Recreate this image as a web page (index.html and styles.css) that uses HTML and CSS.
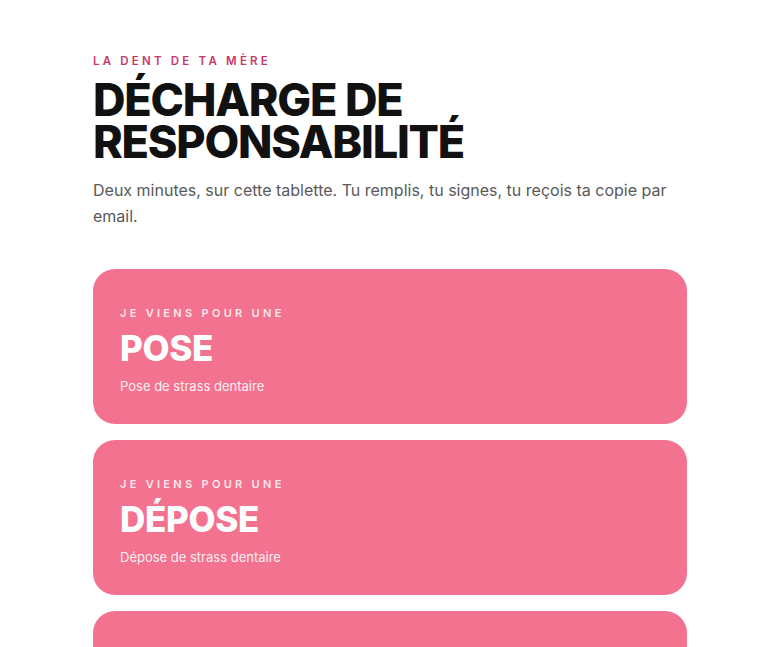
FILE: index.html
```
<!DOCTYPE html>
<html lang="fr">
<head>
<meta charset="utf-8">
<link rel="stylesheet" href="styles.css">
</head>
<body>
<main class="page">
  <header class="intro">
    <p class="brand">LA DENT DE TA MÈRE</p>
    <h1 class="title">DÉCHARGE DE<br>RESPONSABILITÉ</h1>
    <p class="lead">Deux minutes, sur cette tablette. Tu remplis, tu signes, tu reçois ta copie par email.</p>
  </header>
  <section class="choices">
    <button class="card">
      <span class="card-eyebrow">JE VIENS POUR UNE</span>
      <span class="card-title">POSE</span>
      <span class="card-desc">Pose de strass dentaire</span>
    </button>
    <button class="card">
      <span class="card-eyebrow">JE VIENS POUR UNE</span>
      <span class="card-title">DÉPOSE</span>
      <span class="card-desc">Dépose de strass dentaire</span>
    </button>
    <button class="card">
      <span class="card-eyebrow">JE VIENS POUR UN</span>
      <span class="card-title">CONTRÔLE</span>
      <span class="card-desc">Contrôle de strass dentaire</span>
    </button>
  </section>
</main>
</body>
</html>
```
FILE: styles.css
```
* { box-sizing: border-box; }
html, body { margin: 0; padding: 0; background: #ffffff; }
body { font-family: Inter, "Noto Sans", sans-serif; color: #111; overflow: hidden; height: 647px; }
.page { width: 594px; margin: 0 auto; padding-top: 54px; }
.intro { margin-bottom: 40px; }
.brand {
  margin: 0 0 11px;
  font-size: 11.5px; font-weight: 600; letter-spacing: 3.2px;
  color: #c8376a; line-height: 14px;
}
.title {
  margin: 0;
  font-size: 45px; font-weight: 800; letter-spacing: -1.2px;
  line-height: 42px; color: #111;
}
.lead {
  margin: 14px 0 0;
  font-size: 16px; line-height: 26px; color: #595959;
}
.choices { display: flex; flex-direction: column; gap: 16px; }
.card {
  display: flex; flex-direction: column; align-items: flex-start;
  height: 155px; width: 100%;
  border: none; border-radius: 22px;
  background: #f3728f; color: #fff;
  padding: 37px 27px 0;
  font-family: inherit; text-align: left; cursor: pointer;
}
.card-eyebrow {
  font-size: 11px; font-weight: 600; letter-spacing: 3.3px;
  color: rgba(255,255,255,0.85); line-height: 14px;
}
.card-title {
  margin-top: 8px;
  font-size: 35px; font-weight: 800; letter-spacing: -0.3px;
  line-height: 40px;
}
.card-desc {
  margin-top: 9px;
  font-size: 13px; line-height: 18px; color: rgba(255,255,255,0.92);
}
```
